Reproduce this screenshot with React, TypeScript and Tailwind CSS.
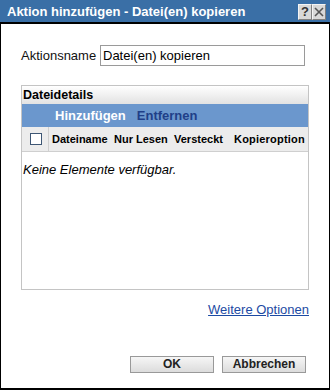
import React from "react";

const sans = { fontFamily: '"Liberation Sans", Arial, sans-serif' };

export default function App() {
  return (
    <div
      className="w-[330px] h-[390px] bg-white flex flex-col overflow-hidden"
      style={sans}
    >
      {/* Title bar */}
      <div className="h-[22px] bg-[#3a6fa6] flex items-center pl-[7px] pr-[4px] shrink-0">
        <span className="text-white font-bold text-[13px] leading-none flex-1 whitespace-nowrap">
          Aktion hinzufügen - Datei(en) kopieren
        </span>
        <div className="flex mt-[1px]">
          <div className="w-[14px] h-[16px] bg-[#d8d8d8] border border-[#f4f4f4] border-r-[#808080] border-b-[#808080] flex items-center justify-center text-[13px] font-bold text-[#333] leading-none">
            ?
          </div>
          <div className="w-[14px] h-[16px] bg-[#d8d8d8] border border-[#f4f4f4] border-r-[#808080] border-b-[#808080] flex items-center justify-center">
            <svg width="10" height="10" viewBox="0 0 10 10">
              <path d="M1 1 L9 9 M9 1 L1 9" stroke="#555" strokeWidth="1.6" />
            </svg>
          </div>
        </div>
      </div>
      <div className="flex-1 flex flex-col border-t-2 border-t-black border-l border-r border-b-2 border-black pl-[20px] pr-[20px]">
        {/* Aktionsname */}
        <div className="flex items-center mt-[21px] h-[21px]">
          <span className="text-[13px] text-[#111] w-[79px] shrink-0">Aktionsname</span>
          <div className="w-[205px] h-[21px] border border-[#9a9a9a] flex items-center pl-[2px] text-[13px] text-black">
            Datei(en) kopieren
          </div>
        </div>

        {/* Table */}
        <div className="mt-[19px] border border-[#c4c4c4] h-[205px] flex flex-col">
          <div className="h-[18px] bg-gradient-to-b from-white to-[#e2e2e2] flex items-center pl-[1px]">
            <span className="text-[12.5px] font-bold text-black leading-none">Dateidetails</span>
          </div>
          <div className="h-[23px] bg-[#6b97cd] flex items-center pl-[33px] gap-[11px]">
            <span className="text-white font-bold text-[13px] leading-none">Hinzufügen</span>
            <span className="text-[#1f3f88] font-bold text-[13px] leading-none">Entfernen</span>
          </div>
          <div className="h-[25px] bg-[#ececec] border-b border-[#cfcfcf] flex items-center">
            <div className="w-[27px] h-full border-r border-[#cfcfcf] flex items-center justify-center">
              <div className="w-[12px] h-[12px] border border-[#3d5674] bg-white ml-[1px]" />
            </div>
            <div className="flex items-center text-[11px] font-bold text-black leading-none whitespace-nowrap">
              <span className="ml-[3px] w-[62px] shrink-0">Dateiname</span>
              <span className="w-[60px] shrink-0">Nur Lesen</span>
              <span className="w-[60px] shrink-0">Versteckt</span>
              <span className="tracking-[0.2px]">Kopieroption</span>
            </div>
          </div>
          <div className="pl-[1px] pt-[5px]">
            <span className="italic text-[13px] text-black">Keine Elemente verfügbar.</span>
          </div>
        </div>

        {/* Link */}
        <div className="flex justify-end mt-[10px]">
          <span className="text-[13px] text-[#1c4aa3] underline">Weitere Optionen</span>
        </div>

        {/* Buttons */}
        <div className="flex justify-end gap-[8px] mt-[36px] pr-[3px]">
          <button className="w-[84px] h-[17px] border border-[#999] bg-gradient-to-b from-[#f6f6f6] to-[#dcdcdc] text-[12px] font-bold text-[#222] leading-none flex items-center justify-center">
            OK
          </button>
          <button className="w-[84px] h-[17px] border border-[#999] bg-gradient-to-b from-[#f6f6f6] to-[#dcdcdc] text-[12px] font-bold text-[#222] leading-none flex items-center justify-center">
            Abbrechen
          </button>
        </div>
      </div>
    </div>
  );
}
